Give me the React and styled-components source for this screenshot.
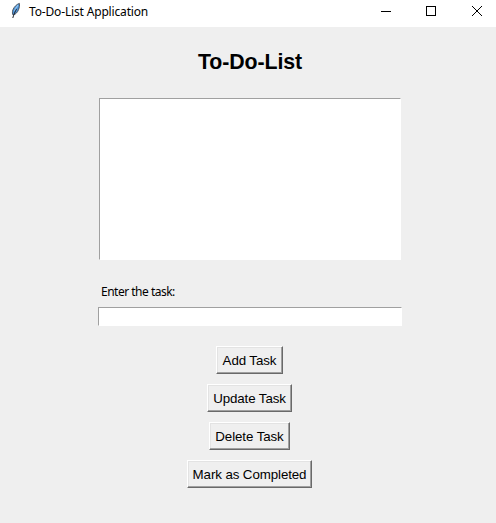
import React from "react";
import styled, { createGlobalStyle } from "styled-components";

const GlobalStyle = createGlobalStyle`
  * { box-sizing: border-box; }
  body { margin: 0; background: #efefef; }
`;

const Window = styled.div`
  width: 496px;
  height: 523px;
  overflow: hidden;
  display: flex;
  flex-direction: column;
  background: #efefef;
  color: #000;
`;

const TitleBar = styled.header`
  flex: none;
  height: 27px;
  display: flex;
  align-items: flex-start;
  background: #fff;
`;

const AppIcon = styled.svg`
  flex: none;
  width: 10px;
  height: 18px;
  margin: 2px 8px 0 11px;
`;

const Caption = styled.span`
  flex: 1;
  padding-top: 4px;
  font: 12px/16px "Noto Sans", "Open Sans", sans-serif;
  letter-spacing: ${(p) => p.$tracking || "0"};
  white-space: nowrap;
`;

const WindowControls = styled.svg`
  flex: none;
  width: 116px;
  height: 27px;
`;

const Content = styled.main`
  width: 499px;
  display: flex;
  flex-direction: column;
  align-items: center;
`;

const Heading = styled.h1`
  margin: 21px 0 0;
  padding-left: 1px;
  height: 50px;
  font: bold 21.33px/28px "Liberation Sans", Arial, sans-serif;
  letter-spacing: -0.1px;
`;

const TaskList = styled.div`
  width: 302px;
  height: 162px;
  margin-left: 1px;
  background: #fff;
  border: 1px solid #fff;
  border-top-color: #a0a0a0;
  border-left-color: #a0a0a0;
`;

const Field = styled.label`
  width: 304px;
  margin: 20px 0 20px 1px;
  display: flex;
  flex-direction: column;
`;

const FieldLabel = styled(Caption)`
  flex: none;
  height: 27px;
  padding: 4px 0 0 3px;
`;

const TaskInput = styled.input`
  width: 304px;
  height: 19px;
  padding: 0 2px;
  outline: none;
  border-radius: 0;
  background: #fff;
  border: 1px solid #fff;
  border-top-color: #a0a0a0;
  border-left-color: #a0a0a0;
`;

const Actions = styled.div`
  display: flex;
  flex-direction: column;
  align-items: center;
  gap: 10px;
`;

const ActionButton = styled.button`
  width: ${(p) => p.$width}px;
  height: 28px;
  padding: 1px 0 0;
  background: #efefef;
  color: #000;
  border: 1px solid;
  border-color: #fff #696969 #696969 #fff;
  border-radius: 0;
  box-shadow: inset -1px -1px #a0a0a0, inset 1px 1px #e3e3e3;
  font: 13.33px/24px "Liberation Sans", Arial, sans-serif;
  letter-spacing: -0.1px;
  white-space: nowrap;
`;

const actions = [
  { label: "Add Task", width: 67 },
  { label: "Update Task", width: 85 },
  { label: "Delete Task", width: 81 },
  { label: "Mark as Completed", width: 125 },
];

export default function App() {
  return (
    <Window>
      <GlobalStyle />
      <TitleBar>
        <AppIcon viewBox="0 0 10 18">
          <path d="M8.4 1.4C6 2.2 3.2 4.4 1.8 8c-.6 2-.4 4 .3 5.2 2.4-.8 4.4-2.8 5.5-5.6.8-2.2 1.1-4.4.8-6.2z" fill="#4f94d8" stroke="#33383f" strokeWidth=".8" />
          <path d="M6.9 3.2C5.7 5 4.6 6.8 3.6 9" fill="none" stroke="#8fc4f2" strokeWidth="1.2" />
          <path d="M5.6 6.8C4.2 9.6 2.8 12.2 1.8 16" fill="none" stroke="#20242b" strokeWidth="1" />
        </AppIcon>
        <Caption $tracking="-0.16px">To-Do-List Application</Caption>
        <WindowControls viewBox="0 0 116 27" fill="none" stroke="#000">
          <path d="M1 11.5h10" shapeRendering="crispEdges" />
          <rect x="46.5" y="6.5" width="9" height="9" shapeRendering="crispEdges" />
          <path d="M92 6l10 10M102 6l-10 10" strokeWidth="1" />
        </WindowControls>
      </TitleBar>
      <Content>
        <Heading>To-Do-List</Heading>
        <TaskList />
        <Field>
          <FieldLabel $tracking="-0.5px">Enter the task:</FieldLabel>
          <TaskInput type="text" />
        </Field>
        <Actions>
          {actions.map((a) => (
            <ActionButton key={a.label} type="button" $width={a.width}>
              {a.label}
            </ActionButton>
          ))}
        </Actions>
      </Content>
    </Window>
  );
}
